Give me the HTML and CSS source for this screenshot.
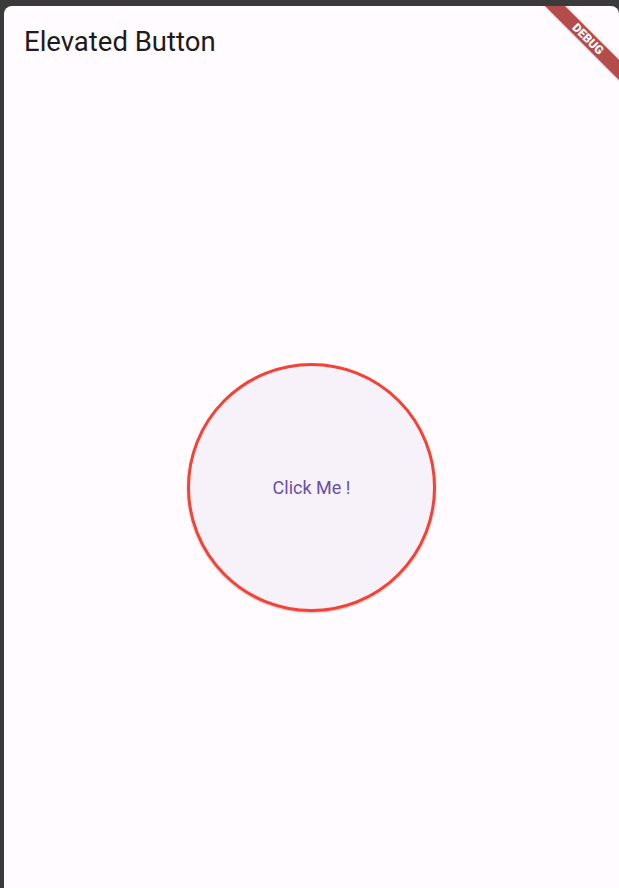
FILE: index.html
```html
<!DOCTYPE html>
<html>
<head>
<meta charset="utf-8">
<link rel="stylesheet" href="styles.css">
</head>
<body>
<div class="window">
  <header class="appbar"><h1 class="title">Elevated Button</h1></header>
  <main class="content">
    <button class="circle-btn">Click Me !</button>
  </main>
  <div class="banner">DEBUG</div>
</div>
</body>
</html>
```
FILE: styles.css
```css
html, body { margin: 0; padding: 0; }
body {
  background: #3a3a3a;
  width: 619px;
  height: 888px;
  overflow: hidden;
  font-family: Roboto, "Noto Sans", sans-serif;
}
.window {
  position: relative;
  margin: 6px 0 0 4px;
  height: 882px;
  background: #fffbfe;
  border-radius: 8px 8px 0 0;
  overflow: hidden;
  display: flex;
  flex-direction: column;
}
.appbar {
  height: 64px;
  flex: none;
  display: flex;
  align-items: center;
  padding-left: 20px;
}
.title {
  margin: 0;
  font-size: 27.5px;
  font-weight: 400;
  color: #1d1b20;
  letter-spacing: 0;
  padding-top: 6px;
}
.content {
  flex: none;
  height: 834px;
  display: flex;
  align-items: center;
  justify-content: center;
}
.circle-btn {
  width: 249px;
  height: 249px;
  box-sizing: border-box;
  border-radius: 50%;
  border: 3px solid #f44336;
  background: #f7f2fa;
  color: #6750a4;
  font-family: Roboto, "Noto Sans", sans-serif;
  font-size: 18px;
  font-weight: 400;
  box-shadow: 0 1px 2px rgba(0,0,0,0.25);
  padding: 0;
}
.banner {
  position: absolute;
  top: 26px;
  right: -29px;
  width: 120px;
  height: 14px;
  line-height: 14px;
  transform: rotate(45deg);
  background: #b54b4b;
  color: #fff;
  font-size: 12px;
  font-weight: 900;
  text-align: center;
  letter-spacing: 0;
  box-shadow: 0 0 3px rgba(0,0,0,0.3);
}
```
